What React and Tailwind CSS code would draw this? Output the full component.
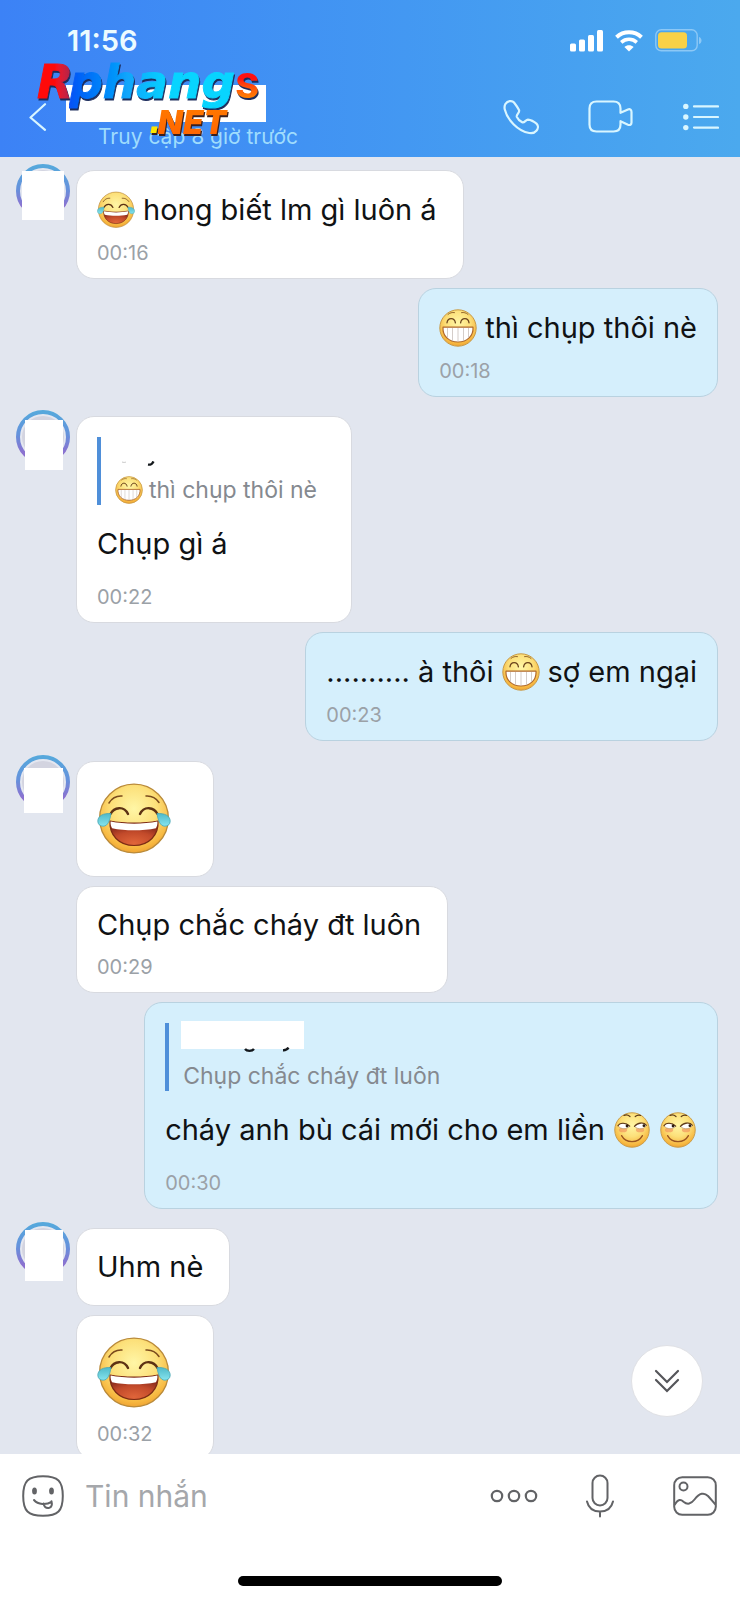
import React from 'react';

function Defs() {
  return (
    <svg className="absolute h-0 w-0" aria-hidden="true">
      <defs>
        <radialGradient id="face" cx="50%" cy="36%" r="66%">
          <stop offset="0" stopColor="#fff6a6" />
          <stop offset="0.5" stopColor="#fce07a" />
          <stop offset="0.85" stopColor="#f7b840" />
          <stop offset="1" stopColor="#ee9f30" />
        </radialGradient>
        <radialGradient id="mouth" cx="50%" cy="90%" r="75%">
          <stop offset="0" stopColor="#e0653a" />
          <stop offset="0.6" stopColor="#c24a2a" />
          <stop offset="1" stopColor="#8a2b1c" />
        </radialGradient>
        <linearGradient id="tear" x1="0" y1="0" x2="0" y2="1">
          <stop offset="0" stopColor="#4fb9c9" />
          <stop offset="1" stopColor="#86e4ee" />
        </linearGradient>
        <linearGradient id="ring" x1="0" y1="0" x2="0" y2="1">
          <stop offset="0" stopColor="#56a8dc" />
          <stop offset="0.45" stopColor="#6592dc" />
          <stop offset="0.8" stopColor="#8a72d0" />
          <stop offset="1" stopColor="#9268cc" />
        </linearGradient>
      </defs>
    </svg>
  );
}

function Joy({ className }) {
  return (
    <svg className={className} viewBox="0 0 74 72" fill="none" role="img" aria-label="cười ra nước mắt">
      <circle cx="37" cy="35.5" r="34.4" fill="url(#face)" stroke="#b98a3a" strokeWidth="1.3" />
      <path d="M12 20C15 15 19 12.6 25 13M49 13c6-.4 10 2 13 6.500" stroke="#7a4a1c" strokeWidth="1.500" strokeLinecap="round" />
      <path d="M13.500 31C17 24 27 22.500 31 31M43 31c4-8.500 14-7 17.500 0" stroke="#5d3214" strokeWidth="2.400" strokeLinecap="round" />
      <path d="M13 38c14 2.800 34 2.800 48 0 1 14-9 24.500-24 24.500S12 52 13 38z" fill="url(#mouth)" stroke="#7c2c14" strokeWidth="1.200" />
      <path d="M13.600 38.600c14 2.700 33 2.700 46.800 0 .2 3-.4 5-1.500 6.600-13 2.800-31 2.800-43.800 0-1.100-1.600-1.700-3.600-1.500-6.600z" fill="#fff" />
      <path d="M14 30.500C6 30 .8 33 .8 38.200c0 3.200 2.600 5 5.400 5C11 43.200 13 37 14 30.500z" fill="url(#tear)" stroke="#48a6b4" strokeWidth=".8" />
      <path d="M60 30.500c8-.5 13.200 2.500 13.200 7.700 0 3.200-2.600 5-5.400 5-4.800 0-6.800-6.200-7.800-12.700z" fill="url(#tear)" stroke="#48a6b4" strokeWidth=".8" />
    </svg>
  );
}

function Grin({ className }) {
  return (
    <svg className={className} viewBox="0 0 38 38" fill="none" role="img" aria-label="cười toe">
      <circle cx="19" cy="19" r="18.200" fill="url(#face)" stroke="#c79a48" strokeWidth="1" />
      <path d="M9 5.400c2-1.600 4-2.200 6.500-1.800M22.500 3.600c2.500-.4 4.500.2 6.500 1.800" stroke="#8a5a24" strokeWidth=".9" strokeLinecap="round" />
      <path d="M8 13.800c.6-5.600 7.600-5.600 8.400 0M21.600 13.800c.8-5.600 7.800-5.600 8.400 0" stroke="#6b431c" strokeWidth="1.300" strokeLinecap="round" />
      <path d="M4 18.200h30c.6 8.800-5.800 14.800-15 14.800S3.400 27 4 18.200z" fill="#fff" stroke="#b0682c" strokeWidth="1.200" strokeLinejoin="round" />
      <path d="M8.500 19v10M13.500 19v13M19 19v13.500M24.500 19v13M29.500 19v10" stroke="#c9c0bb" strokeWidth=".8" />
    </svg>
  );
}

function Smirk({ className }) {
  return (
    <svg className={className} viewBox="0 0 38 38" fill="none" role="img" aria-label="cười gian">
      <circle cx="19" cy="19" r="18.200" fill="url(#face)" stroke="#c79a48" strokeWidth="1" />
      <path d="M10.500 3.600c2.400-1 4.600-.4 6.400 1.200M22.400 4.800c1.600-1.400 3.600-2 5.800-1.200" stroke="#5d3a18" strokeWidth="1.200" strokeLinecap="round" />
      <ellipse cx="9.500" cy="19" rx="4.400" ry="2.400" fill="#f08a5a" opacity=".6" />
      <ellipse cx="27.500" cy="19" rx="4.400" ry="2.400" fill="#f08a5a" opacity=".6" />
      <path d="M4.200 14.600C6 11 12.600 10.800 16.600 15c-2.800 3.400-9.400 3.600-12.400-.4zM21.600 15.200c3.400-4.400 10-4.600 12.600-1.200-1.800 4.200-8.800 5-12.600 1.200z" fill="#fff" stroke="#a8814c" strokeWidth=".6" />
      <path d="M4.200 14.600C6 11 12.600 10.800 16.600 15M21.600 15.200c3.400-4.400 10-4.600 12.600-1.200" stroke="#5f3b18" strokeWidth="1.200" strokeLinecap="round" />
      <circle cx="13.800" cy="14.800" r="1.500" fill="#2e1c0e" />
      <circle cx="31.600" cy="14.400" r="1.500" fill="#2e1c0e" />
      <path d="M8 25c4.500 8.400 17.500 8.400 22 0" stroke="#9a5420" strokeWidth="1.400" strokeLinecap="round" />
    </svg>
  );
}

const faces = {
  joy: { Face: Joy, size: 'h-[38px] w-[38px]' },
  grin: { Face: Grin, size: 'h-[38px] w-[38px]' },
  smirk: { Face: Smirk, size: 'h-9 w-[38px]' },
};

function Parts({ parts, size }) {
  return parts.map((part, i) => {
    const entry = faces[part.face];
    if (!entry) return <span key={i}>{part}</span>;
    return <entry.Face key={i} className={`${size || entry.size} shrink-0`} />;
  });
}

const messages = [
  { avatar: 'ml-[6px] mt-[7px] h-[49px] w-[42px]', parts: [{ face: 'joy' }, 'hong biết lm gì luôn á'], time: '00:16', gap: 'mt-[13px]' },
  { mine: true, parts: [{ face: 'grin' }, 'thì chụp thôi nè'], time: '00:18', gap: 'mt-[9px]' },
  { avatar: 'ml-[9px] mt-[10px] h-[50px] w-[38px]', quote: [{ face: 'grin' }, 'thì chụp thôi nè'], parts: ['Chụp gì á'], time: '00:22', gap: 'mt-[19px]' },
  { mine: true, parts: ['.......... à thôi', { face: 'grin' }, 'sợ em ngại'], time: '00:23', gap: 'mt-[9px]' },
  { avatar: 'ml-[8px] mt-[13px] h-[45px] w-[39px]', big: true, gap: 'mt-5' },
  { parts: ['Chụp chắc cháy đt luôn'], time: '00:29', gap: 'mt-[9px]' },
  { mine: true, quote: ['Chụp chắc cháy đt luôn'], parts: ['cháy anh bù cái mới cho em liền', { face: 'smirk' }, { face: 'smirk' }], time: '00:30', gap: 'mt-[9px]' },
  { avatar: 'ml-[9px] mt-[8px] h-[51px] w-[38px]', parts: ['Uhm nè'], gap: 'mt-[19px]' },
  { big: true, time: '00:32', gap: 'mt-[9px]' },
];

function Avatar({ cover }) {
  return (
    <div className="absolute -top-[6px] left-4 h-[54px] w-[54px]">
      <svg className="absolute inset-0" width="54" height="54" viewBox="0 0 54 54" aria-hidden="true">
        <circle cx="27" cy="27" r="25" fill="#e4e7f0" stroke="url(#ring)" strokeWidth="4" />
        <circle cx="27" cy="27" r="21" fill="#d3d4e0" />
      </svg>
      <div className={`relative bg-white ${cover}`} />
    </div>
  );
}

function Quote({ parts, mine }) {
  return (
    <blockquote className="relative mb-[21px] flex h-[68px] flex-col justify-end border-l-4 border-[#4f8fd9] pl-[14px] pr-2 text-[23px] leading-[30px] text-[#85898f]">
      {mine ? (
        <div className="absolute -top-[2px] left-[12px] h-[28px] w-[123px] bg-white" />
      ) : null}
      <svg className="absolute left-[12px] top-[24px]" width="123" height="6" viewBox="0 0 123 6" fill="none" aria-hidden="true">
        {mine ? (
          <path d="M64 2c2 2.500 7 2.500 9 0M102 3.200c3 .2 4-.4 5.500-2.600" stroke="#14181c" strokeWidth="2.400" />
        ) : (
          <>
            <path d="M35 3.600c3 .4 4-.4 5.500-3.200" stroke="#14181c" strokeWidth="2.400" />
            <path d="M9 1c1.500.6 3 .6 4 0" stroke="#c8c8c8" />
          </>
        )}
      </svg>
      <p className="flex items-center gap-[6px]">
        <Parts parts={parts} size="h-7 w-7" />
      </p>
    </blockquote>
  );
}

function Message({ m }) {
  const tone = m.mine ? 'border-[#b9d2e0] bg-[#d5effc] pr-5' : 'border-[#d8dae0] bg-white pr-[26px]';
  const timeGap = m.quote ? 'mt-[23px]' : 'mt-3';
  return (
    <li className={`relative flex ${m.gap} ${m.mine ? 'justify-end pr-[22px]' : 'pl-[76px]'}`}>
      {m.avatar ? <Avatar cover={m.avatar} /> : null}
      <div className={`rounded-[18px] border-[1px] pl-5 pt-5 ${tone} ${m.big ? 'min-w-[138px]' : ''} ${m.time ? 'pb-[13px]' : 'pb-5'}`}>
        {m.quote ? <Quote parts={m.quote} mine={m.mine} /> : null}
        {m.big ? (
          <Joy className="h-[74px] w-[74px]" />
        ) : (
          <p className="flex min-h-9 items-center gap-2 whitespace-nowrap text-[29px] leading-9 text-[#101214]">
            <Parts parts={m.parts} />
          </p>
        )}
        {m.time ? <time className={`block text-[20px] leading-6 text-[#9ba1a7] ${timeGap}`}>{m.time}</time> : null}
      </div>
    </li>
  );
}

function StatusIcons() {
  return (
    <div className="flex items-center">
      <svg width="34" height="22" viewBox="0 0 34 22" fill="#fff" aria-label="Sóng">
        <rect x="0" y="13.500" width="6" height="8" rx="1.500" />
        <rect x="9" y="9.500" width="6" height="12" rx="1.500" />
        <rect x="18" y="5" width="6" height="16.500" rx="1.500" />
        <rect x="27" y="0" width="6" height="21.500" rx="1.500" />
      </svg>
      <svg className="ml-[11px]" width="28" height="22" viewBox="0 0 28 22" fill="none" aria-label="Wi-Fi">
        <path d="M1.500 7.200c7-6.600 18-6.600 25 0" stroke="#fff" strokeWidth="4" />
        <path d="M6.200 12.300c4.500-4 11.100-4 15.600 0" stroke="#fff" strokeWidth="3.600" />
        <path d="M14 21.500l-4.600-4.600c2.500-2.200 6.700-2.200 9.200 0z" fill="#fff" />
      </svg>
      <svg className="ml-3" width="48" height="23" viewBox="0 0 48 23" fill="none" aria-label="Pin">
        <rect x=".8" y=".8" width="41.400" height="21" rx="5.500" stroke="#8cc8f6" strokeWidth="1.400" />
        <rect x="3" y="3.200" width="29" height="16.200" rx="3.500" fill="#f8d147" />
        <path d="M44 8c3.400 1 3.400 6 0 7z" fill="#8cc8f6" />
      </svg>
    </div>
  );
}

function Logo() {
  return (
    <div className="absolute left-[37px] top-[55px] font-['DejaVu_Sans',sans-serif] font-bold italic" aria-label="Rphangs.NET">
      <div className="flex items-baseline text-[47px] leading-[54px] drop-shadow-[1px_2px_0_#1d2c5c]">
        <span className="bg-linear-to-r from-[#ff0a0a] from-50% to-[#a3224c] bg-clip-text text-transparent [-webkit-text-stroke:1px_transparent]">R</span>
        <span className="-ml-1 bg-linear-to-r from-[#0a50f5] via-[#12a5fb] via-35% to-[#08d4ff] to-60% bg-clip-text text-transparent [-webkit-text-stroke:1px_transparent]">phang</span>
        <span className="bg-linear-to-b from-[#ff1010] from-45% to-[#ff8000] to-80% bg-clip-text font-['Roboto',sans-serif] font-bold not-italic text-transparent">s</span>
      </div>
      <div className="absolute left-[112px] top-[49px] flex text-[33px] leading-9 drop-shadow-[1px_2px_0_#3a2020]">
        <span className="text-[#ffe600]">.</span>
        <span className="-ml-1 bg-linear-to-b from-[#ff7a00] to-[#ff6200] bg-clip-text pr-1 font-['Inter',sans-serif] font-black text-transparent">NET</span>
      </div>
    </div>
  );
}

function Header() {
  return (
    <header className="relative shrink-0 bg-linear-to-r from-[#3c82f6] to-[#4ba9ee] pb-2 text-[#d9f6ff]">
      <div className="flex h-[85px] items-center justify-between pb-1 pl-[67px] pr-[37px]">
        <time className="text-[29px] font-semibold leading-8 text-[#ecfbff]">11:56</time>
        <StatusIcons />
      </div>
      <div className="flex h-16 items-center pr-[21px]">
        <button type="button" aria-label="Quay lại" className="w-[66px] pl-[29px]">
          <svg width="18" height="28" viewBox="0 0 18 28" fill="none" stroke="currentColor" strokeWidth="2.200" strokeLinecap="round" strokeLinejoin="round">
            <path d="M16 1.200L1.500 14.500 16 26.800" />
          </svg>
        </button>
        <div className="min-w-0 flex-1">
          <div className="h-[37px] w-[200px] bg-white" />
          <p className="mt-[3px] pl-8 text-[21px] leading-6 text-[#9fdcfd]">Truy cập 8 giờ trước</p>
        </div>
        <div className="flex items-center">
          <button type="button" aria-label="Gọi thoại">
            <svg width="36" height="36" viewBox="0 0 36 36" fill="none" stroke="currentColor" strokeWidth="2.200" strokeLinejoin="round">
              <path d="M2.500 4.800C4.500 2 9 1 11 3.500c1.800 2.300 3.600 4.700 5 7.500 1.200 2.500-3 4.500-2.200 6.800 1 2.400 3.200 4.200 5.400 5.400 2.200 1 3.400-2.400 5.800-2.600 3.200.2 6.600 2.400 8.800 4.300 1.800 2 1.200 5-.4 6.900-1.600 2-4.600 2.600-7.200 2.200C14.500 32 4.200 20.500 1.800 10.500 1.300 8.500 1.500 6.500 2.500 4.800z" />
            </svg>
          </button>
          <button type="button" aria-label="Gọi video" className="ml-[49px]">
            <svg width="45" height="34" viewBox="0 0 45 34" fill="none" stroke="currentColor" strokeWidth="2.200" strokeLinejoin="round">
              <path d="M32.500 12.800V8.500c0-4.500-2.500-7-7-7h-17c-4.500 0-7 2.500-7 7v16c0 4.500 2.500 7 7 7h17c4.500 0 7-2.500 7-7v-3.300l7.500 3.500c2 .8 3.500 0 3.500-2.200V12c0-2.200-1.500-3.400-3.500-2.600z" />
            </svg>
          </button>
          <button type="button" aria-label="Tùy chọn" className="ml-[50px]">
            <svg width="36" height="28" viewBox="0 0 36 28" fill="currentColor">
              <circle cx="2.800" cy="3.400" r="2.700" />
              <circle cx="2.800" cy="14" r="2.700" />
              <circle cx="2.800" cy="24.600" r="2.700" />
              <path d="M11 3.400h24M11 14h24M11 24.600h24" stroke="currentColor" strokeWidth="2.200" strokeLinecap="round" />
            </svg>
          </button>
        </div>
      </div>
      <Logo />
    </header>
  );
}

function Composer() {
  return (
    <footer className="shrink-0 bg-white pb-[14px] pt-[20px]">
      <form className="flex h-[44px] items-center pl-[22px] pr-[23px] text-[#626366]" onSubmit={(e) => e.preventDefault()}>
        <button type="button" aria-label="Biểu tượng cảm xúc">
          <svg width="42" height="42" viewBox="0 0 42 42" fill="none" stroke="currentColor" strokeWidth="2">
            <path d="M21 1.200C6 1.200 1.200 6 1.200 21S6 40.800 21 40.800 40.800 36 40.800 21 36 1.200 21 1.200z" />
            <ellipse cx="12.500" cy="16" rx="2.400" ry="3.600" fill="currentColor" stroke="none" />
            <ellipse cx="29.500" cy="16" rx="2.400" ry="3.600" fill="currentColor" stroke="none" />
            <path d="M12 25c4 4.800 12.500 5 17.500 1.800M21.500 28.400c.8 3.400 3.200 5 5.600 4.500 2.500-.6 3.300-3.200 2.400-6.600" strokeLinecap="round" />
          </svg>
        </button>
        <input type="text" aria-label="Tin nhắn" placeholder="Tin nhắn" className="ml-[21px] h-11 min-w-0 flex-1 text-[30px] text-[#101214] outline-none placeholder:text-[#a5a7ab]" />
        <button type="button" aria-label="Thêm">
          <svg width="48" height="14" viewBox="0 0 48 14" fill="none" stroke="currentColor" strokeWidth="2.200">
            <circle cx="7" cy="7" r="5.200" />
            <circle cx="24" cy="7" r="5.200" />
            <circle cx="41" cy="7" r="5.200" />
          </svg>
        </button>
        <button type="button" aria-label="Ghi âm" className="ml-12">
          <svg width="28" height="44" viewBox="0 0 28 44" fill="none" stroke="currentColor" strokeWidth="2" strokeLinecap="round">
            <rect x="6.500" y="1.500" width="15" height="30" rx="7.500" />
            <path d="M1 27.500c1.500 6.500 6.600 10 13 10s11.500-3.500 13-10M14 37.500v5" />
          </svg>
        </button>
        <button type="button" aria-label="Gửi ảnh" className="ml-[59px]">
          <svg width="44" height="40" viewBox="0 0 44 40" fill="none" stroke="currentColor" strokeWidth="2">
            <rect x="1.200" y="1.200" width="41.600" height="37.600" rx="8" />
            <circle cx="10.500" cy="10.500" r="4" />
            <path d="M1.500 29c4-6.500 6.500-5.500 9-3.300 4 3.300 7.500 2.300 11-2.200 5-6.500 9.500-7.500 13.500-3.500 3 3 5 6 7.500 8.500" />
          </svg>
        </button>
      </form>
      <div className="mx-auto mt-[58px] h-[10px] w-[264px] rounded-full bg-black" />
    </footer>
  );
}

export default function App() {
  return (
    <div className="flex h-screen flex-col bg-[#e2e6ef] font-['Inter','Noto_Sans',sans-serif]">
      <Defs />
      <Header />
      <main className="relative flex min-h-0 flex-1 flex-col">
        <ul className="min-h-0 flex-1 overflow-y-auto pb-5 [scrollbar-width:none]">
          {messages.map((m, i) => (
            <Message key={i} m={m} />
          ))}
        </ul>
        <button type="button" aria-label="Xuống cuối" className="absolute bottom-[37px] right-[37px] flex h-[72px] w-[72px] items-center justify-center rounded-full border-[1px] border-[#e0e1e5] bg-white text-[#55565a]">
          <svg width="26" height="24" viewBox="0 0 26 24" fill="none" stroke="currentColor" strokeWidth="2.200" strokeLinecap="round">
            <path d="M2 2l11 11L24 2M2 11l11 11 11-11" />
          </svg>
        </button>
      </main>
      <Composer />
    </div>
  );
}
